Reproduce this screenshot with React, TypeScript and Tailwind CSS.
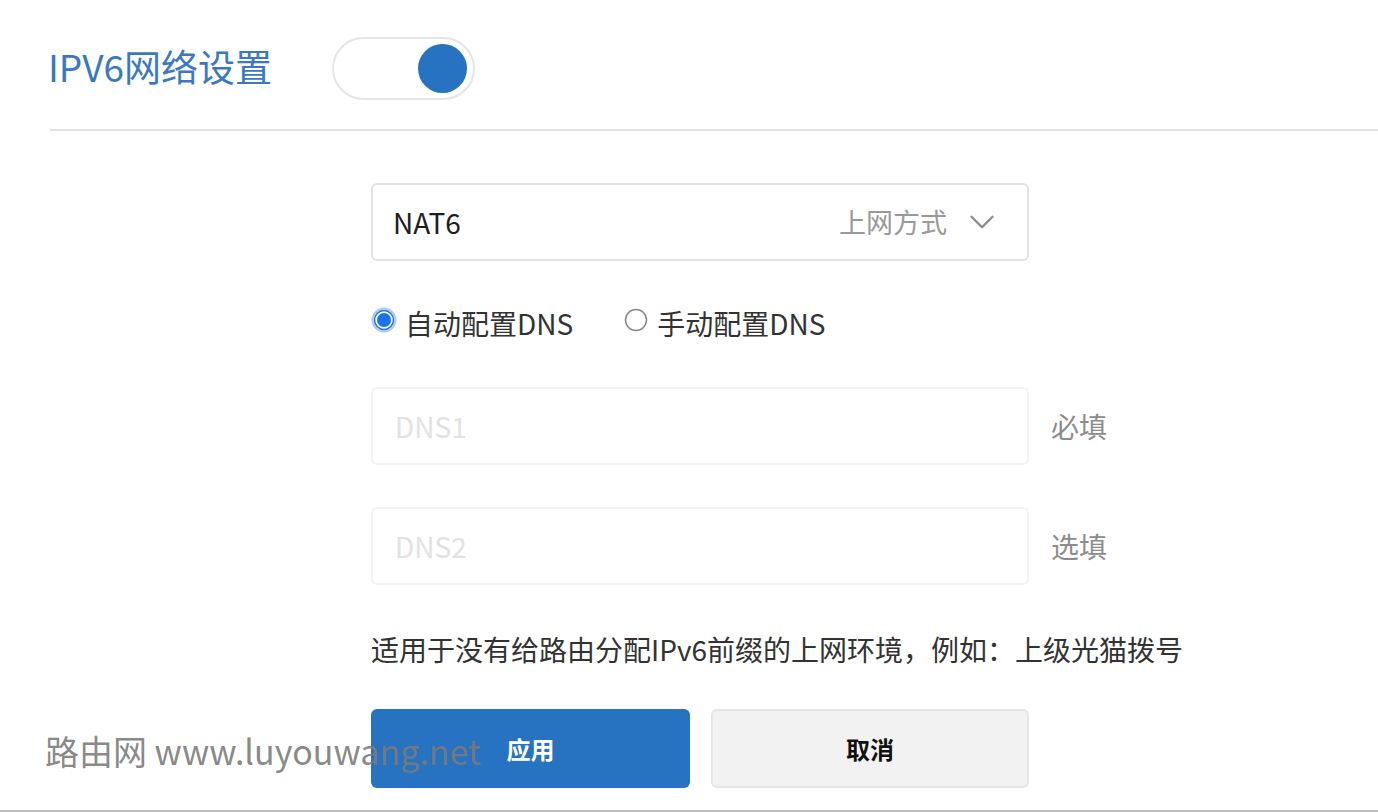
import { ChevronDown } from "lucide-react";

const font = { fontFamily: '"Noto Sans CJK SC", "Noto Sans", sans-serif' };

function Toggle() {
  return (
    <div className="flex h-[63px] w-[143px] items-center justify-end rounded-full border-2 border-[#e6e6e6] bg-white pr-[6px]">
      <div className="h-[49px] w-[49px] rounded-full bg-[#2772c1]" />
    </div>
  );
}

function Radio({ checked, label }: { checked: boolean; label: string }) {
  return (
    <div className="flex items-center gap-[8px]">
      <svg width="26" height="26" viewBox="0 0 26 26" className="-mt-[6px]">
        {checked ? (
          <>
            <circle cx="13" cy="13" r="11.5" fill="none" stroke="#a9cbf5" strokeWidth="2" />
            <circle cx="13" cy="13" r="9.5" fill="#fff" stroke="#1a73e8" strokeWidth="1.5" />
            <circle cx="13" cy="13" r="7" fill="#1a73e8" />
          </>
        ) : (
          <circle cx="13" cy="13" r="10.5" fill="#fff" stroke="#8a8a8a" strokeWidth="1.5" />
        )}
      </svg>
      <span className="text-[28px] leading-none text-[#333]">{label}</span>
    </div>
  );
}

function DnsInput({ placeholder, hint }: { placeholder: string; hint: string }) {
  return (
    <div className="flex items-center">
      <div className="flex h-[78px] w-[658px] items-center rounded-[6px] border-2 border-[#f3f3f3] px-[22px]">
        <span className="text-[28px] text-[#e2e2e2]">{placeholder}</span>
      </div>
      <span className="ml-[22px] text-[28px] text-[#8c8c8c]">{hint}</span>
    </div>
  );
}

export default function App() {
  return (
    <div className="relative h-[812px] w-[1378px] overflow-hidden bg-white" style={font}>
      {/* header */}
      <div className="ml-[50px] flex h-[131px] items-start border-b-2 border-[#e3e3e3] pt-[37px]">
        <h1 className="-ml-[2px] mt-[11px] w-[284px] text-[37px] leading-none text-[#3a79c2]">
          IPV6网络设置
        </h1>
        <Toggle />
      </div>

      <div className="ml-[371px] flex w-[840px] flex-col pt-[52px]">
        {/* connection type */}
        <div className="flex h-[78px] w-[658px] items-center justify-between rounded-[6px] border-2 border-[#e3e3e3] pl-[20px] pr-[24px]">
          <span className="text-[28px] text-[#1e1e1e]">NAT6</span>
          <div className="flex items-center gap-[14px]">
            <span className="text-[27px] text-[#9a9a9a]">上网方式</span>
            <ChevronDown size={42} strokeWidth={1.4} className="text-[#8c8c8c]" />
          </div>
        </div>

        <div className="mt-[48px] flex items-center gap-[50px]">
          <Radio checked label="自动配置DNS" />
          <Radio checked={false} label="手动配置DNS" />
        </div>

        <div className="mt-[50px] flex flex-col gap-[42px]">
          <DnsInput placeholder="DNS1" hint="必填" />
          <DnsInput placeholder="DNS2" hint="选填" />
        </div>

        <p className="mt-[50px] text-[28px] leading-none text-[#333]">
          适用于没有给路由分配IPv6前缀的上网环境，例如：上级光猫拨号
        </p>

        <div className="mt-[46px] flex gap-[21px]">
          <button className="h-[79px] w-[319px] rounded-[6px] bg-[#2772c1] text-[24px] font-bold text-white">
            应用
          </button>
          <button className="h-[79px] w-[318px] rounded-[6px] border-2 border-[#e6e6e6] bg-[#f2f2f2] text-[24px] font-bold text-[#111]">
            取消
          </button>
        </div>
      </div>

      {/* watermark */}
      <div className="absolute left-[45px] top-[734px] text-[34px] leading-none text-[#7a7a7a]/90">
        路由网 www.luyouwang.net
      </div>

      <div className="absolute bottom-0 left-0 h-[2px] w-full bg-[#bdbdbd]" />
    </div>
  );
}
